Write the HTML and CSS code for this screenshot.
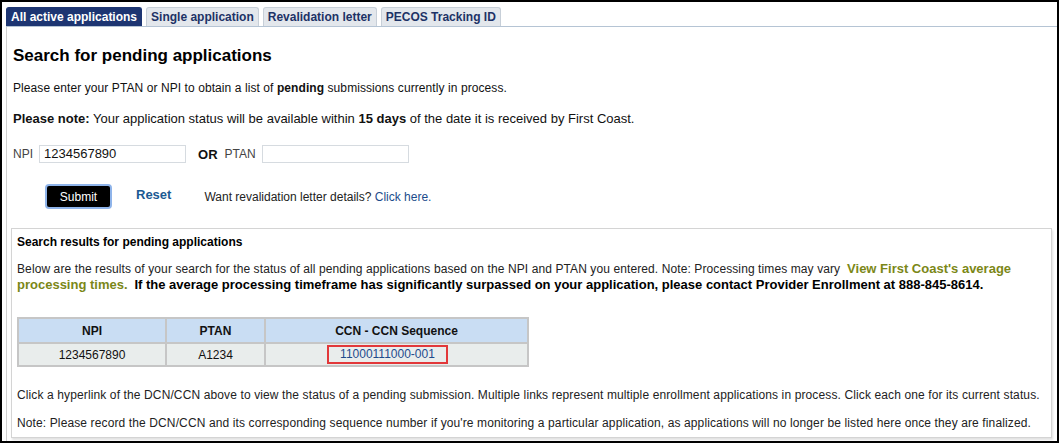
FILE: index.html
```html
<!DOCTYPE html>
<html>
<head>
<meta charset="utf-8">
<link rel="stylesheet" href="styles.css">
</head>
<body>
<div class="frame">
  <div class="tabs">
    <span class="tab active">All active applications</span>
    <span class="tab">Single application</span>
    <span class="tab">Revalidation letter</span>
    <span class="tab">PECOS Tracking ID</span>
  </div>
  <div class="content">
    <h1 class="title">Search for pending applications</h1>
    <p class="line">Please enter your PTAN or NPI to obtain a list of <b>pending</b> submissions currently in process.</p>
    <p class="line note"><b>Please note:</b> Your application status will be available within <b>15 days</b> of the date it is received by First Coast.</p>
    <div class="form-row">
      <label class="lbl">NPI</label>
      <span class="input">1234567890</span>
      <span class="or">OR</span>
      <label class="lbl">PTAN</label>
      <span class="input"></span>
    </div>
    <div class="actions">
      <span class="btn">Submit</span>
      <span class="reset">Reset</span>
      <span class="want">Want revalidation letter details? <span class="link">Click here.</span></span>
    </div>
    <div class="panel">
      <div class="panel-title">Search results for pending applications</div>
      <p class="results-text">Below are the results of your search for the status of all pending applications based on the NPI and PTAN you entered. Note: Processing times may vary&nbsp; <b class="olive">View First Coast's average processing times.</b>&nbsp; <b class="strong">If the average processing timeframe has significantly surpassed on your application, please contact Provider Enrollment at 888-845-8614.</b></p>
      <table class="results">
        <thead>
          <tr><th class="c1">NPI</th><th class="c2">PTAN</th><th class="c3">CCN - CCN Sequence</th></tr>
        </thead>
        <tbody>
          <tr><td>1234567890</td><td>A1234</td><td><span class="ccn">11000111000-001</span></td></tr>
        </tbody>
      </table>
      <p class="foot">Click a hyperlink of the DCN/CCN above to view the status of a pending submission. Multiple links represent multiple enrollment applications in process. Click each one for its current status.</p>
      <p class="foot">Note: Please record the DCN/CCN and its corresponding sequence number if you're monitoring a particular application, as applications will no longer be listed here once they are finalized.</p>
    </div>
  </div>
</div>
</body>
</html>
```
FILE: styles.css
```css
html, body {
  margin: 0;
  padding: 0;
  background: #fff;
}
body {
  font-family: "Liberation Sans", Arial, sans-serif;
  font-size: 12px;
  color: #111;
}
.frame {
  box-sizing: border-box;
  width: 1059px;
  height: 443px;
  border: 2px solid #000;
  padding: 5px 0 0 4px;
  overflow: hidden;
}
.tabs {
  display: flex;
  gap: 4px;
  height: 19px;
  border-bottom: 1px solid #b5c4d4;
}
.tab {
  box-sizing: border-box;
  height: 19px;
  padding: 0 4px;
  line-height: 18px;
  font-weight: bold;
  font-size: 12px;
  color: #1d3266;
  background: #e3e7ec;
  border: 1px solid #c7cfd8;
  border-bottom: none;
  border-radius: 3px 3px 0 0;
}
.tab.active {
  background: #1d3572;
  color: #fff;
  border-color: #1d3572;
}
.content {
  border-left: 1px solid #d0d0d0;
  padding: 0 4px 0 6px;
  height: 420px;
}
.title {
  margin: 0;
  padding-top: 19px;
  font-size: 17px;
  line-height: 20px;
  font-weight: bold;
  color: #000;
}
.line {
  margin: 15px 0 0;
  line-height: 14px;
  letter-spacing: 0.08px;
}
.line + .line {
  margin-top: 17px;
}
.line.note {
  font-size: 13px;
  letter-spacing: 0;
}
.form-row {
  display: flex;
  align-items: center;
  margin-top: 19px;
  height: 18px;
}
.lbl {
  color: #444;
  margin-right: 6px;
}
.input {
  box-sizing: border-box;
  width: 147px;
  height: 18px;
  border: 1px solid #d6dbe0;
  padding: 1px 4px;
  line-height: 14px;
  color: #111;
  font-size: 13px;
}
.or {
  font-weight: bold;
  font-size: 13px;
  color: #111;
  margin: 0 7px 0 12px;
}
.actions {
  display: flex;
  align-items: center;
  margin-top: 21px;
  padding-left: 32px;
  height: 25px;
}
.btn {
  box-sizing: border-box;
  width: 67px;
  height: 25px;
  background: #000;
  color: #fff;
  border: 2px solid #8fb4ea;
  border-radius: 4px;
  text-align: center;
  line-height: 22px;
  font-size: 12px;
}
.reset {
  margin-left: 24px;
  color: #1b5a93;
  font-weight: bold;
  font-size: 13px;
  position: relative;
  top: -2px;
}
.want {
  margin-left: 33px;
  color: #222;
}
.link {
  color: #1c4c8c;
}
.panel {
  margin: 19px 0 0 -2px;
  width: 1041px;
  box-sizing: border-box;
  height: 210px;
  border: 1px solid #d4d4d4;
  box-shadow: 1px 2px 2px rgba(0,0,0,0.12);
  padding: 6px 6px 0 5px;
}
.panel-title {
  font-weight: bold;
  color: #000;
  line-height: 14px;
}
.results-text {
  margin: 12px 0 0;
  line-height: 15px;
  color: #222;
  letter-spacing: 0.1px;
}
.results-text b {
  font-size: 13px;
  letter-spacing: 0;
  color: #000;
}
.results-text .olive {
  color: #7b8717;
}
.results {
  margin-top: 24px;
  border-collapse: collapse;
  width: 512px;
}
.results th, .results td {
  border: 2px solid #c6c6c6;
  text-align: center;
  font-size: 12px;
  color: #111;
}
.results th {
  background: #c9ddf3;
  height: 23px;
  padding: 0;
}
.results td {
  background: #e9edec;
  height: 21px;
  padding: 0;
}
.c1 { width: 146px; }
.c2 { width: 97px; }
.ccn {
  display: inline-block;
  border: 2px solid #e2383a;
  color: #1e4b8c;
  padding: 0 11px;
  margin-right: 18px;
  line-height: 15px;
  font-size: 12px;
}
.foot {
  margin: 21px 0 0;
  line-height: 14px;
  color: #222;
  letter-spacing: 0.12px;
}
.foot + .foot {
  margin-top: 14px;
}
```
